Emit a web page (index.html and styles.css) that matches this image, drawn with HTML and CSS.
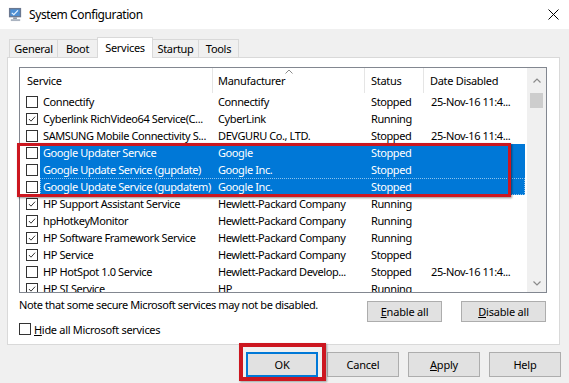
FILE: index.html
```html
<!DOCTYPE html>
<html>
<head>
<meta charset="utf-8">
<title>System Configuration</title>
<link rel="stylesheet" href="styles.css">
</head>
<body>
<div class="window">
  <div class="titlebar">
    <svg class="appicon" viewBox="0 0 16 16" aria-hidden="true">
      <rect x="1" y="1" width="13" height="10" fill="#6b7890"/>
      <rect x="2.5" y="2.5" width="10" height="7" fill="#4d8fd4"/>
      <path d="M4 6.3 L6.2 8.2 L10.6 3.6" stroke="#e8f4ff" stroke-width="1.3" fill="none"/>
      <rect x="5.5" y="11" width="4" height="2" fill="#8d99a8"/>
      <rect x="3" y="13" width="10" height="2" fill="#aab3c0"/>
    </svg>
    <span class="title">System Configuration</span>
    <svg class="close" viewBox="0 0 11 11" aria-hidden="true">
      <path d="M0.5 0.5 L10.5 10.5 M10.5 0.5 L0.5 10.5" stroke="#000" stroke-width="1" fill="none"/>
    </svg>
  </div>
  <div class="client">
    <div class="tabs">
      <div class="tab t-general">General</div>
      <div class="tab t-boot">Boot</div>
      <div class="tab t-services active">Services</div>
      <div class="tab t-startup">Startup</div>
      <div class="tab t-tools">Tools</div>
    </div>
    <div class="panel">
      <div class="list">
        <div class="listmain">
          <div class="header">
            <div class="hcol h1">Service</div>
            <div class="hcol h2">Manufacturer
              <svg class="sort" viewBox="0 0 8 5" aria-hidden="true"><polyline points="0.5,4.5 4,1 7.5,4.5" stroke="#8a8a8a" fill="none"/></svg>
            </div>
            <div class="hcol h3">Status</div>
            <div class="hcol h4">Date Disabled</div>
          </div>

          <div class="row">
            <div class="cbcell"><span class="cb"></span></div>
            <div class="cells"><span class="c1">Connectify</span><span class="c2">Connectify</span><span class="c3">Stopped</span><span class="c4">25-Nov-16 11:4...</span></div>
          </div>
          <div class="row">
            <div class="cbcell"><span class="cb"><svg viewBox="0 0 12 12"><polyline points="2.3,6 4.8,8.6 9.7,3.2" stroke="#222" stroke-width="1.1" fill="none"/></svg></span></div>
            <div class="cells"><span class="c1">Cyberlink RichVideo64 Service(C...</span><span class="c2">CyberLink</span><span class="c3">Running</span><span class="c4"></span></div>
          </div>
          <div class="row">
            <div class="cbcell"><span class="cb"></span></div>
            <div class="cells"><span class="c1">SAMSUNG Mobile Connectivity S...</span><span class="c2">DEVGURU Co., LTD.</span><span class="c3">Stopped</span><span class="c4">25-Nov-16 11:4...</span></div>
          </div>
          <div class="row sel">
            <div class="cbcell"><span class="cb"></span></div>
            <div class="cells"><span class="c1">Google Updater Service</span><span class="c2">Google</span><span class="c3">Stopped</span><span class="c4"></span></div>
          </div>
          <div class="row sel">
            <div class="cbcell"><span class="cb"></span></div>
            <div class="cells"><span class="c1">Google Update Service (gupdate)</span><span class="c2">Google Inc.</span><span class="c3">Stopped</span><span class="c4"></span></div>
          </div>
          <div class="row sel focus">
            <div class="cbcell"><span class="cb"></span></div>
            <div class="cells"><span class="c1">Google Update Service (gupdatem)</span><span class="c2">Google Inc.</span><span class="c3">Stopped</span><span class="c4"></span></div>
          </div>
          <div class="row">
            <div class="cbcell"><span class="cb"><svg viewBox="0 0 12 12"><polyline points="2.3,6 4.8,8.6 9.7,3.2" stroke="#222" stroke-width="1.1" fill="none"/></svg></span></div>
            <div class="cells"><span class="c1">HP Support Assistant Service</span><span class="c2">Hewlett-Packard Company</span><span class="c3">Running</span><span class="c4"></span></div>
          </div>
          <div class="row">
            <div class="cbcell"><span class="cb"><svg viewBox="0 0 12 12"><polyline points="2.3,6 4.8,8.6 9.7,3.2" stroke="#222" stroke-width="1.1" fill="none"/></svg></span></div>
            <div class="cells"><span class="c1">hpHotkeyMonitor</span><span class="c2">Hewlett-Packard Company</span><span class="c3">Running</span><span class="c4"></span></div>
          </div>
          <div class="row">
            <div class="cbcell"><span class="cb"><svg viewBox="0 0 12 12"><polyline points="2.3,6 4.8,8.6 9.7,3.2" stroke="#222" stroke-width="1.1" fill="none"/></svg></span></div>
            <div class="cells"><span class="c1">HP Software Framework Service</span><span class="c2">Hewlett-Packard Company</span><span class="c3">Running</span><span class="c4"></span></div>
          </div>
          <div class="row">
            <div class="cbcell"><span class="cb"><svg viewBox="0 0 12 12"><polyline points="2.3,6 4.8,8.6 9.7,3.2" stroke="#222" stroke-width="1.1" fill="none"/></svg></span></div>
            <div class="cells"><span class="c1">HP Service</span><span class="c2">Hewlett-Packard Company</span><span class="c3">Stopped</span><span class="c4"></span></div>
          </div>
          <div class="row">
            <div class="cbcell"><span class="cb"></span></div>
            <div class="cells"><span class="c1">HP HotSpot 1.0 Service</span><span class="c2">Hewlett-Packard Develop...</span><span class="c3">Stopped</span><span class="c4">25-Nov-16 11:4...</span></div>
          </div>
          <div class="row">
            <div class="cbcell"><span class="cb"><svg viewBox="0 0 12 12"><polyline points="2.3,6 4.8,8.6 9.7,3.2" stroke="#222" stroke-width="1.1" fill="none"/></svg></span></div>
            <div class="cells"><span class="c1">HP SI Service</span><span class="c2">HP</span><span class="c3">Running</span><span class="c4"></span></div>
          </div>
        </div>
        <div class="scrollbar">
          <div class="sb-up"><svg viewBox="0 0 8 5" aria-hidden="true"><polyline points="0.5,4.5 4,1 7.5,4.5" stroke="#8a8a8a" stroke-width="1.2" fill="none"/></svg></div>
          <div class="sb-thumb"></div>
          <div class="sb-track"></div>
          <div class="sb-down"><svg viewBox="0 0 8 5" aria-hidden="true"><polyline points="0.5,0.5 4,4 7.5,0.5" stroke="#8a8a8a" stroke-width="1.2" fill="none"/></svg></div>
        </div>
        <div class="mark mark-rows"></div>
      </div>
      <div class="bottom">
        <div class="bottom-left">
          <p class="note">Note that some secure Microsoft services may not be disabled.</p>
          <div class="hide"><span class="cb"></span><span><u>H</u>ide all Microsoft services</span></div>
        </div>
        <div class="btns">
          <button class="btn btn-enable"><u>E</u>nable all</button>
          <button class="btn btn-disable"><u>D</u>isable all</button>
        </div>
      </div>
    </div>
    <div class="footer">
      <div class="okwrap"><button class="btn fbtn default">OK</button></div>
      <button class="btn fbtn">Cancel</button>
      <button class="btn fbtn"><u>A</u>pply</button>
      <button class="btn fbtn">Help</button>
    </div>
  </div>
</div>
</body>
</html>
```

FILE: styles.css
```css
* { box-sizing: border-box; }
html, body { margin: 0; padding: 0; }
body {
  width: 569px;
  height: 383px;
  overflow: hidden;
  font-family: "Noto Sans", "Open Sans", sans-serif;
  font-size: 11px;
  letter-spacing: -0.3px;
  color: #000;
  background: #f0f0f0;
}
.window { width: 569px; height: 383px; display: flex; flex-direction: column; }

.titlebar {
  height: 29px;
  background: #fff;
  display: flex;
  align-items: center;
  padding-left: 8px;
}
.appicon { width: 15px; height: 15px; margin-right: 6px; }
.title { flex: 1; font-size: 12px; letter-spacing: -0.4px; }
.close { width: 11px; height: 11px; margin-right: 10px; }

.client {
  flex: 1;
  display: flex;
  flex-direction: column;
  padding: 0 9px 0 7px;
}

.tabs {
  height: 28px;
  display: flex;
  align-items: flex-end;
  padding-left: 2px;
}
.tab {
  height: 18px;
  border: 1px solid #d9d9d9;
  border-bottom: none;
  background: #f0f0f0;
  text-align: center;
  line-height: 17px;
  margin-left: -1px;
}
.tab:first-child { margin-left: 0; }
.t-general { width: 49px; }
.t-boot { width: 41px; }
.t-services { width: 56px; }
.t-startup { width: 47px; }
.t-tools { width: 41px; }
.tab.active {
  height: 21px;
  background: #fff;
  position: relative;
  z-index: 2;
  margin-bottom: -1px;
  line-height: 19px;
}

.panel {
  height: 288px;
  background: #fff;
  border: 1px solid #d9d9d9;
  padding: 9px 12px 0 11px;
}

.list {
  position: relative;
  height: 226px;
  border: 1px solid #828790;
  display: flex;
}
.listmain { flex: 1; overflow: hidden; }
.header {
  height: 25px;
  display: grid;
  grid-template-columns: 193px 152px 59px 103px;
  align-items: stretch;
}
.hcol {
  position: relative;
  display: flex;
  align-items: center;
  border-right: 1px solid #e5e5e5;
}
.h1 { padding-left: 7px; }
.h2 { padding-left: 5px; }
.h3 { padding-left: 6px; }
.h4 { padding-left: 6px; border-right: none; }
.sort {
  position: absolute;
  top: 1px;
  left: 72px;
  width: 8px;
  height: 5px;
}

.row { height: 17px; display: flex; white-space: nowrap; }
.cbcell { width: 20px; display: flex; align-items: center; padding-left: 6px; }
.cb {
  width: 12px;
  height: 12px;
  border: 1px solid #333;
  background: #fff;
  display: inline-flex;
}
.cb svg { width: 10px; height: 10px; }
.cells {
  width: 485px;
  display: grid;
  grid-template-columns: 173px 152px 59px 101px;
  align-items: center;
  line-height: 17px;
  letter-spacing: -0.4px;
}
.cells span { overflow: hidden; }
.c1 { padding-left: 3px; }
.c2 { padding-left: 5px; }
.c3 { padding-left: 6px; }
.c4 { padding-left: 7px; }
.row.sel .cells { background: #0078d7; color: #fff; }
.row.focus .cells { outline: 1px dotted rgba(255,255,255,0.55); outline-offset: -1px; }

.scrollbar {
  width: 19px;
  background: #f0f0f0;
  display: flex;
  flex-direction: column;
}
.sb-up { height: 25px; display: flex; align-items: center; justify-content: center; }
.sb-down { height: 17px; display: flex; align-items: center; justify-content: center; }
.sb-up svg, .sb-down svg { width: 8px; height: 5px; }
.sb-thumb { height: 15px; margin: 0 3px; background: #cdcdcd; }
.sb-track { flex: 1; }

.mark {
  position: absolute;
  border: 3px solid #cc1720;
  box-shadow: 1px 1px 2px rgba(0,0,0,0.45);
  pointer-events: none;
}
.mark-rows { left: -3px; top: 75px; width: 494px; height: 54px; }

.bottom { display: flex; margin-top: 5px; }
.bottom-left { flex: 1; }
.note { margin: 0; line-height: 14px; letter-spacing: -0.4px; }
.hide {
  margin-top: 10px;
  height: 14px;
  display: flex;
  align-items: center;
  gap: 3px;
}
.btns { display: flex; gap: 19px; margin-top: 3px; margin-right: 1px; }

.btn {
  font-family: inherit;
  font-size: 11px;
  letter-spacing: -0.2px;
  color: #000;
  background: #e1e1e1;
  border: 1px solid #adadad;
  padding: 0;
  margin: 0;
}
.btn-enable { width: 75px; height: 21px; }
.btn-disable { width: 85px; height: 21px; }

.footer {
  flex: 1;
  display: flex;
  justify-content: flex-end;
  align-items: flex-start;
  gap: 9px;
  padding-top: 7px;
  margin-right: -1px;
}
.fbtn { width: 72px; height: 25px; }
.okwrap { position: relative; display: flex; }
.default { border: 2px solid #0078d7; }
.okwrap::after {
  content: "";
  position: absolute;
  left: -7px;
  top: -9px;
  right: -8px;
  bottom: -4px;
  border: 4px solid #cc1720;
  box-shadow: 1px 1px 2px rgba(0,0,0,0.35);
}
```
